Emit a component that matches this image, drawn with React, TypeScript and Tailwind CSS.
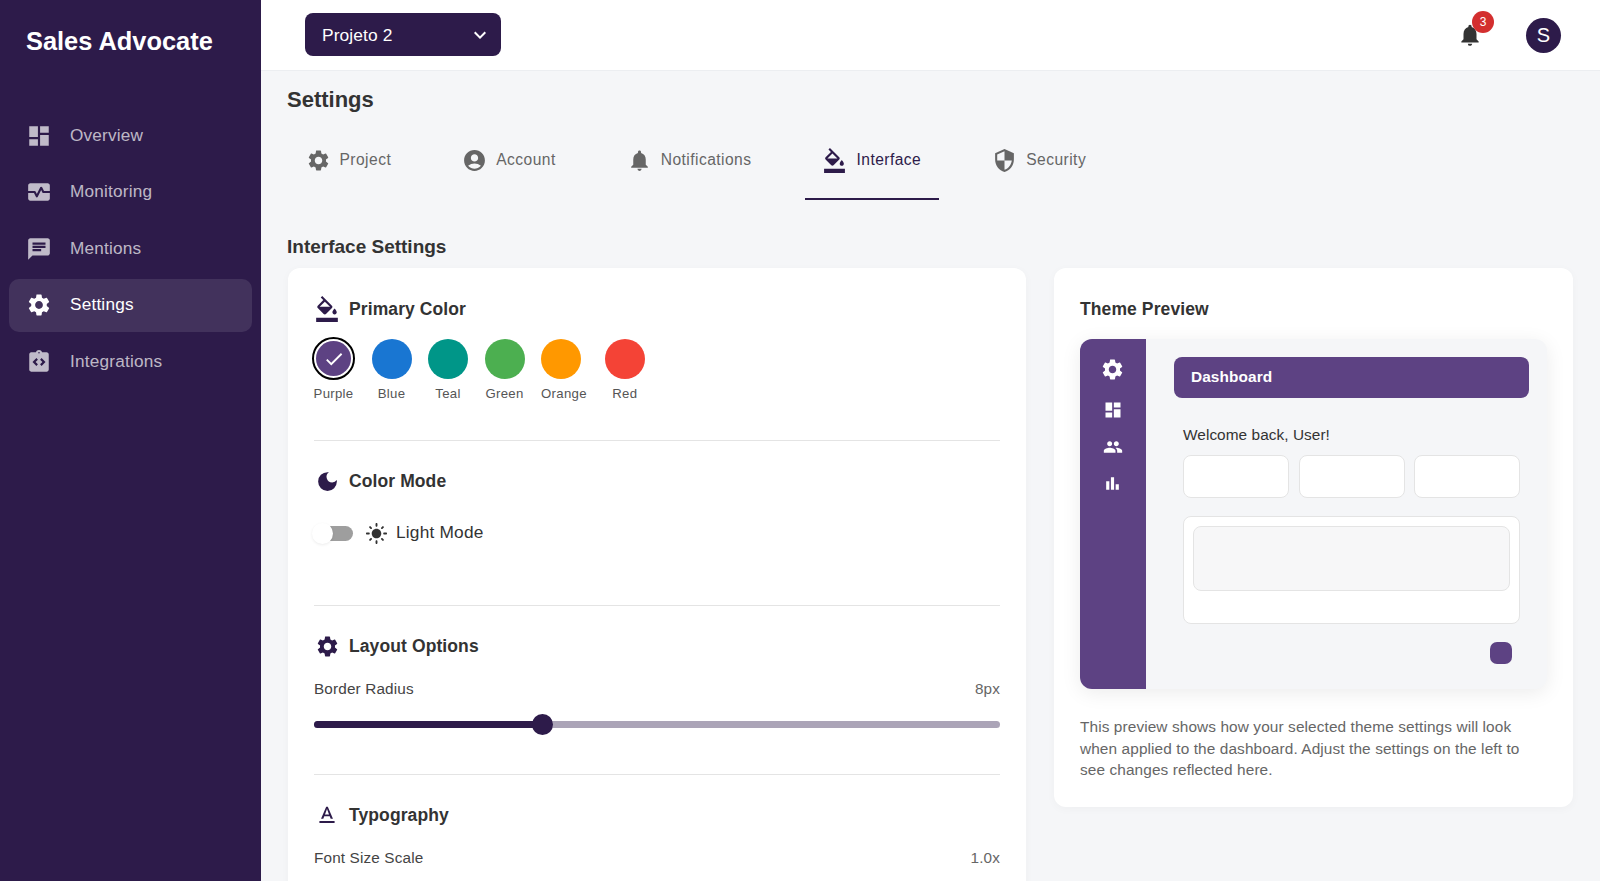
import type { ReactNode } from "react";
import {
  MdBarChart,
  MdAccountCircle,
  MdCheck,
  MdChat,
  MdDarkMode,
  MdDashboard,
  MdFormatColorFill,
  MdIntegrationInstructions,
  MdKeyboardArrowDown,
  MdLightMode,
  MdMonitorHeart,
  MdNotifications,
  MdPeople,
  MdSecurity,
  MdSettings,
  MdTextFormat,
} from "react-icons/md";

const navItems = [
  { label: "Overview", icon: MdDashboard },
  { label: "Monitoring", icon: MdMonitorHeart },
  { label: "Mentions", icon: MdChat },
  { label: "Settings", icon: MdSettings, active: true },
  { label: "Integrations", icon: MdIntegrationInstructions },
];

const tabs = [
  { label: "Project", icon: MdSettings },
  { label: "Account", icon: MdAccountCircle },
  { label: "Notifications", icon: MdNotifications },
  { label: "Interface", icon: MdFormatColorFill, active: true },
  { label: "Security", icon: MdSecurity },
];

const swatches = [
  { label: "Purple", color: "bg-[#5d4283]", selected: true },
  { label: "Blue", color: "bg-[#1976d2]" },
  { label: "Teal", color: "bg-[#009688]" },
  { label: "Green", color: "bg-[#4caf50]" },
  { label: "Orange", color: "bg-[#ff9800]" },
  { label: "Red", color: "bg-[#f44336]" },
];

function SectionTitle({ icon, children }: { icon: ReactNode; children: ReactNode }) {
  return (
    <div className="flex h-7 items-center gap-[9px] text-[#2d1b4a]">
      <span className="flex w-[26px] justify-center">{icon}</span>
      <h3 className="text-[17.5px] font-bold tracking-[0.1px] text-[#333]">{children}</h3>
    </div>
  );
}

function SliderRow({ label, value }: { label: string; value: string }) {
  return (
    <>
      <div className="mt-[19px] flex h-[20px] items-center justify-between">
        <span className="text-[15.3px] tracking-[0.15px] text-[#444]">{label}</span>
        <span className="text-[15.3px] tracking-[0.15px] text-[#666]">{value}</span>
      </div>
      <div className="relative mt-[15px] h-[21px]">
        <div className="absolute inset-x-0 top-[7px] h-[7px] rounded-full bg-[#aba4b7]" />
        <div className="absolute left-0 top-[7px] h-[7px] w-[229px] rounded-full bg-[#2d1b4a]" />
        <div className="absolute left-[218px] top-0 h-[21px] w-[21px] rounded-full bg-[#2d1b4a]" />
      </div>
    </>
  );
}

export default function App() {
  return (
    <div className="flex h-[881px] overflow-hidden bg-[#f5f6f8] font-['Liberation_Sans',Arial,sans-serif]">
      {/* Sidebar */}
      <aside className="flex w-[261px] shrink-0 flex-col bg-[#2d1b4a] px-[9px]">
        <div className="pl-[17px] pt-[24px] text-[25.4px] font-bold leading-[34px] text-white">Sales Advocate</div>
        <nav className="mt-[51px] flex flex-col gap-[3.5px]">
          {navItems.map((item) => (
            <div
              key={item.label}
              className={
                item.active
                  ? "flex h-[53px] items-center gap-[18px] rounded-[10px] bg-white/10 pl-[17px] text-white"
                  : "flex h-[53px] items-center gap-[18px] rounded-[10px] pl-[17px] text-white/70"
              }
            >
              <item.icon size={26} />
              <span className="text-[17.2px] tracking-[0.2px]">{item.label}</span>
            </div>
          ))}
        </nav>
      </aside>

      <div className="flex min-w-0 flex-1 flex-col">
        {/* Topbar */}
        <header className="flex h-[71px] shrink-0 items-center justify-between border-b border-[#eceef1] bg-white pl-[44px] pr-[39px]">
          <div className="mb-[1px] flex h-[43px] w-[196px] items-center justify-between rounded-[8px] bg-[#2d1b4a] pl-[17px] pr-[9px] text-white">
            <span className="pt-[1px] text-[17.4px] leading-[22px] tracking-[0.1px]">Projeto 2</span>
            <MdKeyboardArrowDown size={24} />
          </div>
          <div className="flex items-center gap-[43px]">
            <div className="relative text-[#333]">
              <MdNotifications size={26} />
              <span className="absolute -right-[11px] -top-[11px] flex h-[22px] w-[22px] items-center justify-center rounded-full bg-[#d32f2f] text-[12px] text-white">
                3
              </span>
            </div>
            <div className="flex h-[35px] w-[35px] items-center justify-center rounded-full bg-[#2d1b4a] text-[20px] text-white">S</div>
          </div>
        </header>

        {/* Content */}
        <main className="min-h-0 flex-1 overflow-hidden pl-[27px] pr-[27px]">
          <h1 className="-ml-[1px] mt-[15px] text-[22px] font-bold leading-[28px] text-[#333]">Settings</h1>

          <div className="mt-[16px] flex gap-[36px]">
            {tabs.map((tab) => (
              <div
                key={tab.label}
                className={
                  tab.active
                    ? "flex h-[70px] items-center gap-[9px] border-b-2 border-[#2d1b4a] pl-[17.5px] pr-[17.5px] pb-[8px] text-[#2d1b4a]"
                    : "flex h-[70px] items-center gap-[9px] border-b-2 border-transparent pl-[17.5px] pr-[17.5px] pb-[8px] text-[#666]"
                }
              >
                <tab.icon size={25} />
                <span className="text-[15.6px] tracking-[0.45px]">{tab.label}</span>
              </div>
            ))}
          </div>

          <h2 className="-ml-[1px] mt-[33px] text-[19px] font-bold leading-[28px] text-[#333]">Interface Settings</h2>

          <div className="mt-[7px] flex items-start gap-[28px]">
            {/* Left card */}
            <section className="h-[700px] w-[738px] shrink-0 rounded-[12px] bg-white px-[26px] pt-[27px] shadow-[0_2px_10px_rgba(0,0,0,0.03)]">
              <SectionTitle icon={<MdFormatColorFill size={26} />}>Primary Color</SectionTitle>
              <div className="-ml-[2px] mt-[14px] flex items-start gap-[16.5px]">
                {swatches.map((s) => (
                  <div key={s.label} className="flex flex-col items-start last:ml-[1.5px]">
                    <div className="flex h-[43px] items-center">
                      {s.selected ? (
                        <div className="flex h-[43px] w-[43px] items-center justify-center rounded-full border-2 border-black bg-white">
                          <div className={`flex h-[35px] w-[35px] items-center justify-center rounded-full text-white ${s.color}`}>
                            <MdCheck size={22} />
                          </div>
                        </div>
                      ) : (
                        <div className={`h-[40px] w-[40px] rounded-full ${s.color}`} />
                      )}
                    </div>
                    <span className="mt-[5px] w-full min-w-[40px] text-center text-[13.2px] leading-[18px] tracking-[0.3px] text-[#555]">{s.label}</span>
                  </div>
                ))}
              </div>

              <div className="mt-[37px] border-t border-[#e4e4e4]" />

              <div className="mt-[26px]">
                <SectionTitle icon={<MdDarkMode size={25} />}>Color Mode</SectionTitle>
                <div className="mt-[24px] flex h-[28px] items-center">
                  <div className="relative h-[15px] w-[39px] rounded-full bg-[#9e9e9e]">
                    <div className="absolute -left-[2px] -top-[3px] h-[21px] w-[21px] rounded-full bg-white shadow-[0_1px_3px_rgba(0,0,0,0.08)]" />
                  </div>
                  <MdLightMode size={23} className="ml-[12px] text-[#333]" />
                  <span className="ml-[8px] text-[17.3px] tracking-[0.2px] text-[#333]">Light Mode</span>
                </div>
              </div>

              <div className="mt-[58px] border-t border-[#e4e4e4]" />

              <div className="mt-[26px]">
                <SectionTitle icon={<MdSettings size={25} />}>Layout Options</SectionTitle>
                <SliderRow label="Border Radius" value="8px" />
              </div>

              <div className="mt-[39px] border-t border-[#e4e4e4]" />

              <div className="mt-[26px]">
                <SectionTitle icon={<MdTextFormat size={27} />}>Typography</SectionTitle>
                <SliderRow label="Font Size Scale" value="1.0x" />
              </div>
            </section>

            {/* Theme preview */}
            <section className="w-[519px] shrink-0 rounded-[12px] bg-white px-[26px] pb-[26px] pt-[27px] shadow-[0_2px_10px_rgba(0,0,0,0.03)]">
              <h3 className="h-7 text-[17.5px] font-bold leading-7 tracking-[0.1px] text-[#333]">Theme Preview</h3>
              <div className="mt-[16px] flex h-[350px] w-[467px] overflow-hidden rounded-[12px] bg-[#f5f6f8] shadow-[0_4px_20px_rgba(0,0,0,0.08)]">
                <div className="flex w-[65.5px] shrink-0 flex-col items-center gap-[17px] bg-[#5d4283] pt-[18px] text-white">
                  <MdSettings size={25} />
                  <MdDashboard size={20} className="mt-[1px]" />
                  <MdPeople size={20} />
                  <MdBarChart size={19} />
                </div>
                <div className="min-w-0 flex-1 pl-[28.5px] pr-[18px] pt-[18px]">
                  <div className="flex h-[41px] items-center rounded-[8px] bg-[#5d4283] pb-[1px] pl-[17px] text-[15.4px] font-bold tracking-[0.1px] text-white">
                    Dashboard
                  </div>
                  <div className="pl-[9px] pr-[9px]">
                    <p className="mt-[27px] text-[15.4px] leading-[20px] tracking-[0.05px] text-[#333]">Welcome back, User!</p>
                    <div className="mt-[10px] grid grid-cols-3 gap-[9.5px]">
                      <div className="h-[43px] rounded-[8px] border border-[#e4e4e4] bg-white" />
                      <div className="h-[43px] rounded-[8px] border border-[#e4e4e4] bg-white" />
                      <div className="h-[43px] rounded-[8px] border border-[#e4e4e4] bg-white" />
                    </div>
                    <div className="mt-[18px] h-[108px] rounded-[8px] border border-[#e4e4e4] bg-white px-[9px] pt-[9px]">
                      <div className="h-[65px] rounded-[8px] border border-[#e4e4e4] bg-[#f7f7f8]" />
                    </div>
                    <div className="mt-[18px] flex justify-end pr-[8px]">
                      <div className="h-[22px] w-[22px] rounded-[7px] bg-[#5d4283]" />
                    </div>
                  </div>
                </div>
              </div>
              <p className="mt-[27px] text-[15.4px] leading-[21.7px] tracking-[0.1px] text-[#666]">
                This preview shows how your selected theme settings will look when applied to the dashboard. Adjust the settings on the left to see changes reflected here.
              </p>
            </section>
          </div>
        </main>
      </div>
    </div>
  );
}
